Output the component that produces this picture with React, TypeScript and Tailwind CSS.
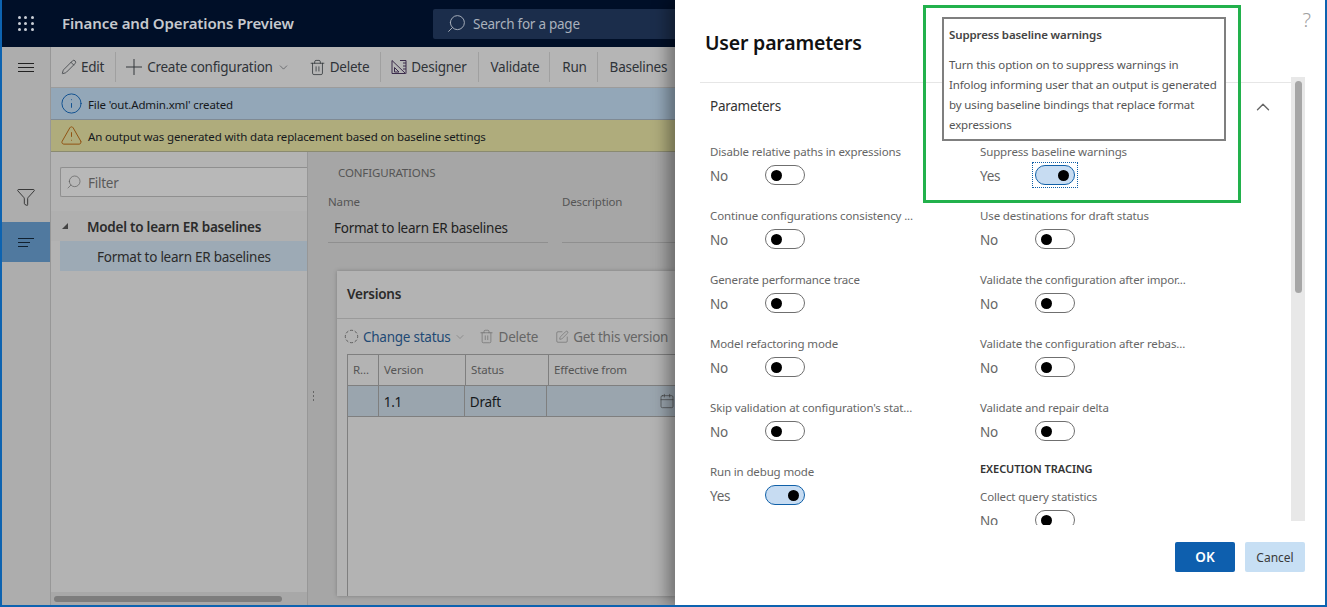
import React from 'react';
import {
  Calendar,
  ChevronDown,
  ChevronUp,
  CircleDashed,
  Funnel,
  Info,
  Pencil,
  Plus,
  Search,
  SquarePen,
  Trash2,
  TriangleAlert,
} from 'lucide-react';

const leftParams = [
  { label: 'Disable relative paths in expressions', on: false },
  { label: 'Continue configurations consistency ...', on: false },
  { label: 'Generate performance trace', on: false },
  { label: 'Model refactoring mode', on: false },
  { label: "Skip validation at configuration's stat...", on: false },
  { label: 'Run in debug mode', on: true },
];

const rightParams = [
  { label: 'Suppress baseline warnings', on: true, focused: true },
  { label: 'Use destinations for draft status', on: false },
  { label: 'Validate the configuration after impor...', on: false },
  { label: 'Validate the configuration after rebas...', on: false },
  { label: 'Validate and repair delta', on: false },
];

function Toggle({ on, focused }: { on: boolean; focused?: boolean }) {
  return (
    <div className={`flex h-[26px] w-[46px] items-center justify-center border border-dotted ${focused ? 'border-[#1060a8]' : 'border-transparent'}`}>
      <div
        className={`flex h-[20px] w-[40px] items-center rounded-full border px-[5px] ${
          on ? 'justify-end border-[#1060a8] bg-[#c7dcf2]' : 'justify-start border-[#6f6f6f] bg-white'
        }`}
      >
        <div className="h-[11px] w-[11px] rounded-full bg-black" />
      </div>
    </div>
  );
}

function Param({ label, on, focused }: { label: string; on: boolean; focused?: boolean }) {
  return (
    <div className="h-[64px]">
      <div className="h-[17px] -translate-y-px whitespace-nowrap text-[11.5px] leading-[17px] tracking-[-0.14px] text-[#666]">{label}</div>
      <div className="mt-[1px] flex items-center">
        <span className="w-[52px] translate-y-px text-[13.5px] tracking-[-0.25px] text-[#666]">{on ? 'Yes' : 'No'}</span>
        <Toggle on={on} focused={focused} />
      </div>
    </div>
  );
}

function ToolButton({
  icon,
  label,
  chevron,
  textOnly,
}: {
  icon?: React.ReactNode;
  label: string;
  chevron?: boolean;
  textOnly?: boolean;
}) {
  // the create button runs straight into Delete, with no divider between them
  const edges = chevron
    ? 'pl-[10px] pr-[9px]'
    : textOnly
      ? 'border-r border-[#a0a0a0] pl-[12px] pr-[10px]'
      : 'border-r border-[#a0a0a0] pl-[10px] pr-[11px]';
  return (
    <div className={`flex h-[30px] items-center gap-[4px] whitespace-nowrap text-[13.5px] tracking-[-0.25px] text-[#2f3338] ${edges}`}>
      {icon}
      <span>{label}</span>
      {chevron && <ChevronDown size={13} strokeWidth={1} />}
    </div>
  );
}

function DesignerIcon() {
  return (
    <svg width="16" height="16" viewBox="0 0 16 16" fill="none" stroke="#3b2b4b" strokeWidth="1">
      <path d="M1 1.5 L14.5 14.5 H1 Z" />
      <path d="M3.5 8.5 L8 13 H3.5 Z" />
      <path d="M9 1.5 H15 V14.5" />
      <path d="M12 4 H15 M12 7 H15 M12 10 H15" />
    </svg>
  );
}

function AppGrid() {
  return (
    <div className="grid w-[16px] grid-cols-3 gap-[3px]">
      {Array.from({ length: 9 }, (_, i) => (
        <div key={i} className="h-[3px] w-[3px] rounded-full bg-[#c9ced6]" />
      ))}
    </div>
  );
}

function Background() {
  return (
    <div className="flex h-full w-[675px] shrink-0 flex-col overflow-hidden border-l-2 border-[#0d63b0]">
      <div className="flex h-[47px] shrink-0 items-center bg-[#000f28]">
        <div className="ml-[16px] w-[44px]">
          <AppGrid />
        </div>
        <div className="w-[371px] text-[15px] font-semibold tracking-[-0.1px] text-[#c6c9ce]">Finance and Operations Preview</div>
        <div className="flex h-[30px] flex-1 items-center gap-[6px] rounded-l-[2px] bg-[#1b2d4b] pl-[13px] text-[13.5px] tracking-[-0.25px] text-[#aab1bc]">
          <Search size={21} strokeWidth={1.1} className="-scale-x-100" />
          <span className="translate-y-px">Search for a page</span>
        </div>
      </div>

      <div className="flex min-h-0 flex-1">
        <div className="flex w-[49px] shrink-0 flex-col border-r border-[#979797] bg-[#adadad]">
          <div className="flex h-[41px] items-center justify-center">
            <div className="flex w-[16px] flex-col gap-[3px]">
              <div className="h-px bg-[#222]" />
              <div className="h-px bg-[#222]" />
              <div className="h-px bg-[#222]" />
            </div>
          </div>
          <div className="mt-[85px] flex h-[48px] items-center justify-center">
            <Funnel size={20} strokeWidth={1} className="text-[#222]" />
          </div>
          <div className="mt-[1px] flex h-[40px] items-center justify-center bg-[#50799f]">
            <div className="flex w-[16px] flex-col gap-[3px]">
              <div className="h-px bg-[#10202f]" />
              <div className="h-px w-[12px] bg-[#10202f]" />
              <div className="h-px w-[10px] bg-[#10202f]" />
            </div>
          </div>
        </div>

        <div className="flex min-w-0 flex-1 flex-col">
          <div className="flex h-[41px] shrink-0 items-center border-b border-[#9c9c9c] bg-[#b5b5b5]">
            <ToolButton icon={<Pencil size={16} strokeWidth={1.1} />} label="Edit" />
            <ToolButton icon={<Plus size={26} strokeWidth={0.9} className="-ml-[5px] -mr-[4px]" />} label="Create configuration" chevron />
            <ToolButton icon={<Trash2 size={17} strokeWidth={1.1} />} label="Delete" />
            <ToolButton icon={<DesignerIcon />} label="Designer" />
            <ToolButton label="Validate" textOnly />
            <ToolButton label="Run" textOnly />
            <div className="whitespace-nowrap pl-[12px] text-[13.5px] tracking-[-0.25px] text-[#2f3338]">Baselines</div>
          </div>
          <div className="flex h-[32px] shrink-0 items-center gap-[5px] border-b border-[#7f8a94] bg-[#93a7b8] pl-[9px] text-[11.5px] tracking-[-0.14px] text-[#16191c]">
            <Info size={23} strokeWidth={1} className="text-[#0f4f8f]" />
            <span className="mt-[2px]">File 'out.Admin.xml' created</span>
          </div>
          <div className="flex h-[32px] shrink-0 items-center gap-[5px] border-b border-[#8a8a70] bg-[#afac7c] pl-[9px] text-[11.5px] tracking-[-0.14px] text-[#16191c]">
            <TriangleAlert size={23} strokeWidth={1} className="text-[#8f4f10]" />
            <span className="mt-[2px]">An output was generated with data replacement based on baseline settings</span>
          </div>

          <div className="flex min-h-0 flex-1">
            <div className="flex w-[257px] shrink-0 flex-col border-r border-[#979797] bg-[#b3b3b3]">
              <div className="ml-[9px] mt-[15px] flex h-[30px] items-center gap-[6px] rounded-l-[2px] border border-r-0 border-[#8f8f8f] bg-[#b8b8b8] pl-[5px] text-[13.5px] tracking-[-0.25px] text-[#5a5a5a]">
                <Search size={16} strokeWidth={1} className="-scale-x-100" />
                <span className="translate-y-px">Filter</span>
              </div>
              <div className="mt-[14px] flex h-[30px] items-center bg-[#b0b0b0] pl-[11px] text-[13.5px] font-semibold tracking-[-0.25px] text-[#2b2b2b]">
                <div className="mr-[19px] h-0 w-0 border-b-[6px] border-l-[6px] border-b-[#444] border-l-transparent" />
                <span className="translate-y-px">Model to learn ER baselines</span>
              </div>
              <div className="ml-[9px] flex h-[30px] items-center bg-[#9daab5] pl-[37px] text-[13.5px] tracking-[-0.25px] text-[#2b2b2b]">
                <span className="translate-y-px">Format to learn ER baselines</span>
              </div>
              <div className="flex-1" />
              <div className="flex h-[13px] shrink-0 items-center bg-[#a8a8a8] pl-[3px]">
                <div className="h-[6px] w-[228px] rounded-full bg-[#7d7d7d]" />
              </div>
            </div>

            <div className="flex min-w-0 flex-1 flex-col bg-[#a6a6a6]">
              <div className="flex min-h-0 flex-1">
                <div className="flex w-[29px] shrink-0 items-center justify-start pl-[5px]">
                  <div className="mt-[44px] flex flex-col gap-[2px]">
                    <div className="h-[2px] w-[1px] bg-[#666]" />
                    <div className="h-[2px] w-[1px] bg-[#666]" />
                    <div className="h-[2px] w-[1px] bg-[#666]" />
                  </div>
                </div>
                <div className="flex min-w-0 flex-1 flex-col">
                  <div className="h-[119px] shrink-0">
                    <div className="pl-[1px] pt-[12px] text-[11.5px] tracking-[-0.14px] text-[#555]">CONFIGURATIONS</div>
                    <div className="-ml-[9px] mt-[12px] flex gap-[14px]">
                      <div className="w-[220px] shrink-0">
                        <div className="text-[11.5px] tracking-[-0.14px] text-[#555]">Name</div>
                        <div className="mt-[4px] flex h-[28px] items-center border-b border-[#8f8f8f] pl-[6px] text-[13.5px] tracking-[-0.25px] text-[#222]">
                          Format to learn ER baselines
                        </div>
                      </div>
                      <div className="w-[120px] shrink-0">
                        <div className="text-[11.5px] tracking-[-0.14px] text-[#555]">Description</div>
                        <div className="mt-[4px] h-[28px] border-b border-[#8f8f8f]" />
                      </div>
                    </div>
                  </div>
                  <div className="flex min-h-0 flex-1 flex-col bg-[#b3b3b3] pl-[10px] shadow-[0_0_4px_rgba(0,0,0,0.25)]">
                    <div className="-ml-[10px] flex h-[48px] shrink-0 items-center border-b border-[#9a9a9a] pl-[10px] text-[13.5px] font-semibold tracking-[-0.25px] text-[#2b2b2b]">
                      Versions
                    </div>
                    <div className="-ml-[3px] flex h-[35px] shrink-0 items-center whitespace-nowrap text-[13.5px] tracking-[-0.25px] text-[#666]">
                      <CircleDashed size={15} strokeWidth={1} className="text-[#333]" />
                      <span className="ml-[4px] translate-y-px text-[#1f4a75]">Change status</span>
                      <ChevronDown size={12} strokeWidth={1} className="ml-[3px]" />
                      <Trash2 size={15} strokeWidth={1} className="ml-[13px]" />
                      <span className="ml-[5px] translate-y-px">Delete</span>
                      <SquarePen size={14} strokeWidth={1} className="ml-[17px]" />
                      <span className="ml-[4px] translate-y-px">Get this version</span>
                    </div>
                    <div className="flex min-h-0 flex-1 flex-col border-l border-[#7f7f7f]">
                      <div className="flex h-[32px] shrink-0 border-y border-[#7f7f7f] text-[11.5px] tracking-[-0.14px] text-[#555]">
                        <div className="flex w-[31px] items-center border-r border-[#7f7f7f] pl-[5px]">R...</div>
                        <div className="flex w-[87px] items-center border-r border-[#7f7f7f] pl-[5px]">Version</div>
                        <div className="flex w-[83px] items-center border-r border-[#7f7f7f] pl-[5px]">Status</div>
                        <div className="flex flex-1 items-center pl-[5px]">Effective from</div>
                      </div>
                      <div className="flex h-[31px] shrink-0 border-b border-[#7f7f7f] bg-[#9aa5ae] text-[13.5px] tracking-[-0.25px] text-[#16191c]">
                        <div className="w-[31px] border-r border-[#7f7f7f]" />
                        <div className="flex w-[87px] items-center border-r border-[#7f7f7f] pl-[5px]">
                          <span className="translate-y-px">1.1</span>
                        </div>
                        <div className="flex w-[83px] items-center border-r border-[#7f7f7f] pl-[5px]">
                          <span className="translate-y-px">Draft</span>
                        </div>
                        <div className="flex flex-1 items-center pl-[112px]">
                          <Calendar size={16} strokeWidth={1} className="shrink-0 text-[#444]" />
                        </div>
                      </div>
                    </div>
                  </div>
                </div>
              </div>
              <div className="h-[9px] shrink-0" />
            </div>
          </div>
        </div>
      </div>
    </div>
  );
}

function Dialog() {
  return (
    <div className="relative flex min-w-0 flex-1 flex-col bg-white pl-[25px] pr-[20px] shadow-[-8px_0_14px_rgba(0,0,0,0.35)]">
      <div className="absolute right-[14px] top-[8px] text-[20px] font-light leading-[24px] text-[#a0a0a0]">?</div>

      <div className="flex h-[83px] shrink-0 items-center border-b border-[#e6e6e6] pl-[5px]">
        <h1 className="mt-[4px] text-[19.5px] font-semibold tracking-[-0.2px] text-[#111]">User parameters</h1>
      </div>

      <div className="flex h-[442px] shrink-0">
        <div className="relative min-w-0 flex-1 overflow-hidden pl-[10px]">
          <div className="flex h-[61px] items-start pt-[13px]">
            <span className="text-[13.5px] tracking-[-0.25px] text-[#333]">Parameters</span>
          </div>
          <ChevronUp size={22} strokeWidth={1.5} className="absolute right-[17px] top-[13px] text-[#666]" />
          <div className="flex">
            <div className="w-[270px] shrink-0">
              {leftParams.map((p) => (
                <Param key={p.label} {...p} />
              ))}
            </div>
            <div className="w-[270px] shrink-0">
              {rightParams.map((p) => (
                <Param key={p.label} {...p} />
              ))}
              <div className="-mt-[3px] text-[11px] font-semibold leading-[16px] tracking-[-0.05px] text-[#333]">EXECUTION TRACING</div>
              <div className="mt-[12px]">
                <Param label="Collect query statistics" on={false} />
              </div>
            </div>
          </div>
        </div>
        <div className="relative -mt-[6px] flex h-[444px] w-[14px] shrink-0 justify-center bg-[#e8e8e8] pt-[4px]">
          <div className="h-[212px] w-[7px] rounded-full bg-[#a6a6a6]" />
        </div>
      </div>

      <div className="mt-[17px] flex justify-end gap-[10px]">
        <button className="h-[30px] w-[60px] rounded-[2px] bg-[#0e5fae] pt-px text-[13.5px] font-semibold text-white">OK</button>
        <button className="h-[30px] w-[60px] rounded-[2px] bg-[#c7dff4] pt-px text-[12px] text-[#3a3a3a]">Cancel</button>
      </div>

      {/* callout drawn over the dialog in the original screenshot */}
      <div className="absolute left-[248px] top-[5px] h-[198px] w-[318px] border-[3px] border-[#22b14c]" />
      <div className="absolute left-[267px] top-[17px] h-[124px] w-[284px] border-2 border-[#7f7f7f] bg-white px-[5px] pt-[6px] text-[11.5px] leading-[20px] tracking-[-0.12px] text-[#555]">
        <div className="font-semibold text-[#444]">Suppress baseline warnings</div>
        <div className="mt-[10px]">
          Turn this option on to suppress warnings in Infolog informing user that an output is generated by using baseline bindings that replace format expressions
        </div>
      </div>
    </div>
  );
}

export default function App() {
  return (
    <div className="flex h-[607px] w-[1327px] overflow-hidden border-b-2 border-r-2 border-[#0d63b0] bg-white font-['Noto_Sans',sans-serif]">
      <Background />
      <Dialog />
    </div>
  );
}
